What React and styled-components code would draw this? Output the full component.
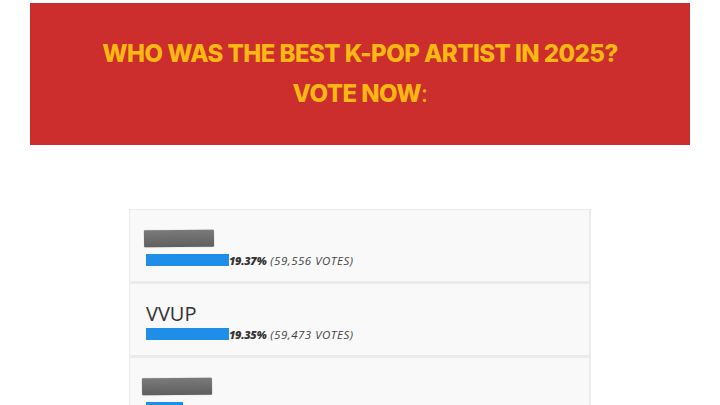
import React from "react";
import styled, { createGlobalStyle } from "styled-components";

const Global = createGlobalStyle`
  html, body { margin: 0; padding: 0; background: #fff; }
  body { font-family: "Open Sans", "DejaVu Sans", sans-serif; }
`;

const Page = styled.div`
  padding: 3px 30px 0;
  display: flex;
  flex-direction: column;
  align-items: center;
`;

const Banner = styled.header`
  width: 660px;
  height: 142px;
  background: #cc2d2d;
  display: flex;
  flex-direction: column;
  align-items: center;
  justify-content: center;
  padding-bottom: 0px;
  box-sizing: border-box;
`;

const Line = styled.div`
  font-family: Inter, "Open Sans", sans-serif;
  font-weight: 800;
  font-size: 24px;
  line-height: 40px;
  color: #fdb813;
  letter-spacing: -0.55px;
  text-transform: uppercase;
`;

const Light = styled.span`
  font-weight: 400;
`;

const Poll = styled.section`
  margin-top: 64px;
  width: 462px;
  background: #ebebeb;
  padding: 1px 2px 0 1px;
  display: flex;
  flex-direction: column;
  gap: 3px;
  box-sizing: border-box;
`;

const Row = styled.div`
  background: #f9f9f9;
  height: 71px;
  padding: ${(p) => (p.$blur ? "20px" : "17px")} 16px 0;
  box-sizing: border-box;
  display: flex;
  flex-direction: column;
`;

const Name = styled.div`
  font-family: "Open Sans", sans-serif;
  font-weight: 400;
  font-size: 20px;
  line-height: 26px;
  color: #333;
  height: 26px;
`;

const Redacted = styled.div`
  width: 70px;
  height: 17px;
  margin-left: ${(p) => p.$dx || 0}px;
  margin-bottom: 6px;
  background: linear-gradient(#7a7a7a, #5f5f5f);
  border-radius: 1px;
  box-shadow: 0 0 1px rgba(0, 0, 0, 0.4);
  transform: rotate(-0.6deg);
`;

const Result = styled.div`
  display: flex;
  align-items: center;
  height: 14px;
  margin-left: 0px;
  font-family: "Open Sans", sans-serif;
  font-size: 11px;
  font-style: italic;
  color: #333;
`;

const Bar = styled.div`
  height: 12px;
  background: #1f8ee8;
`;

const Pct = styled.b`
  font-weight: 800;
  margin-right: 4px;
  letter-spacing: -0.3px;
`;

const Votes = styled.span`
  font-size: 11.5px;
  letter-spacing: 0.5px;
  color: #444;
`;

const data = [
  { name: null, pct: "19.37%", votes: "59,556", w: 83, dx: -2 },
  { name: "VVUP", pct: "19.35%", votes: "59,473", w: 83 },
  { name: null, pct: "9.40%", votes: "28,934", w: 37, dx: -4 },
];

export default function App() {
  return (
    <>
      <Global />
      <Page>
        <Banner>
          <Line>Who was the best K-pop artist in 2025?</Line>
          <Line>
            Vote now<Light>:</Light>
          </Line>
        </Banner>
        <Poll>
          {data.map((d, i) => (
            <Row key={i} $blur={!d.name}>
              {d.name ? <Name>{d.name}</Name> : <Redacted $dx={d.dx} />}
              <Result>
                <Bar style={{ width: d.w }} />
                <Pct>{d.pct}</Pct>
                <Votes>({d.votes} VOTES)</Votes>
              </Result>
            </Row>
          ))}
        </Poll>
      </Page>
    </>
  );
}
